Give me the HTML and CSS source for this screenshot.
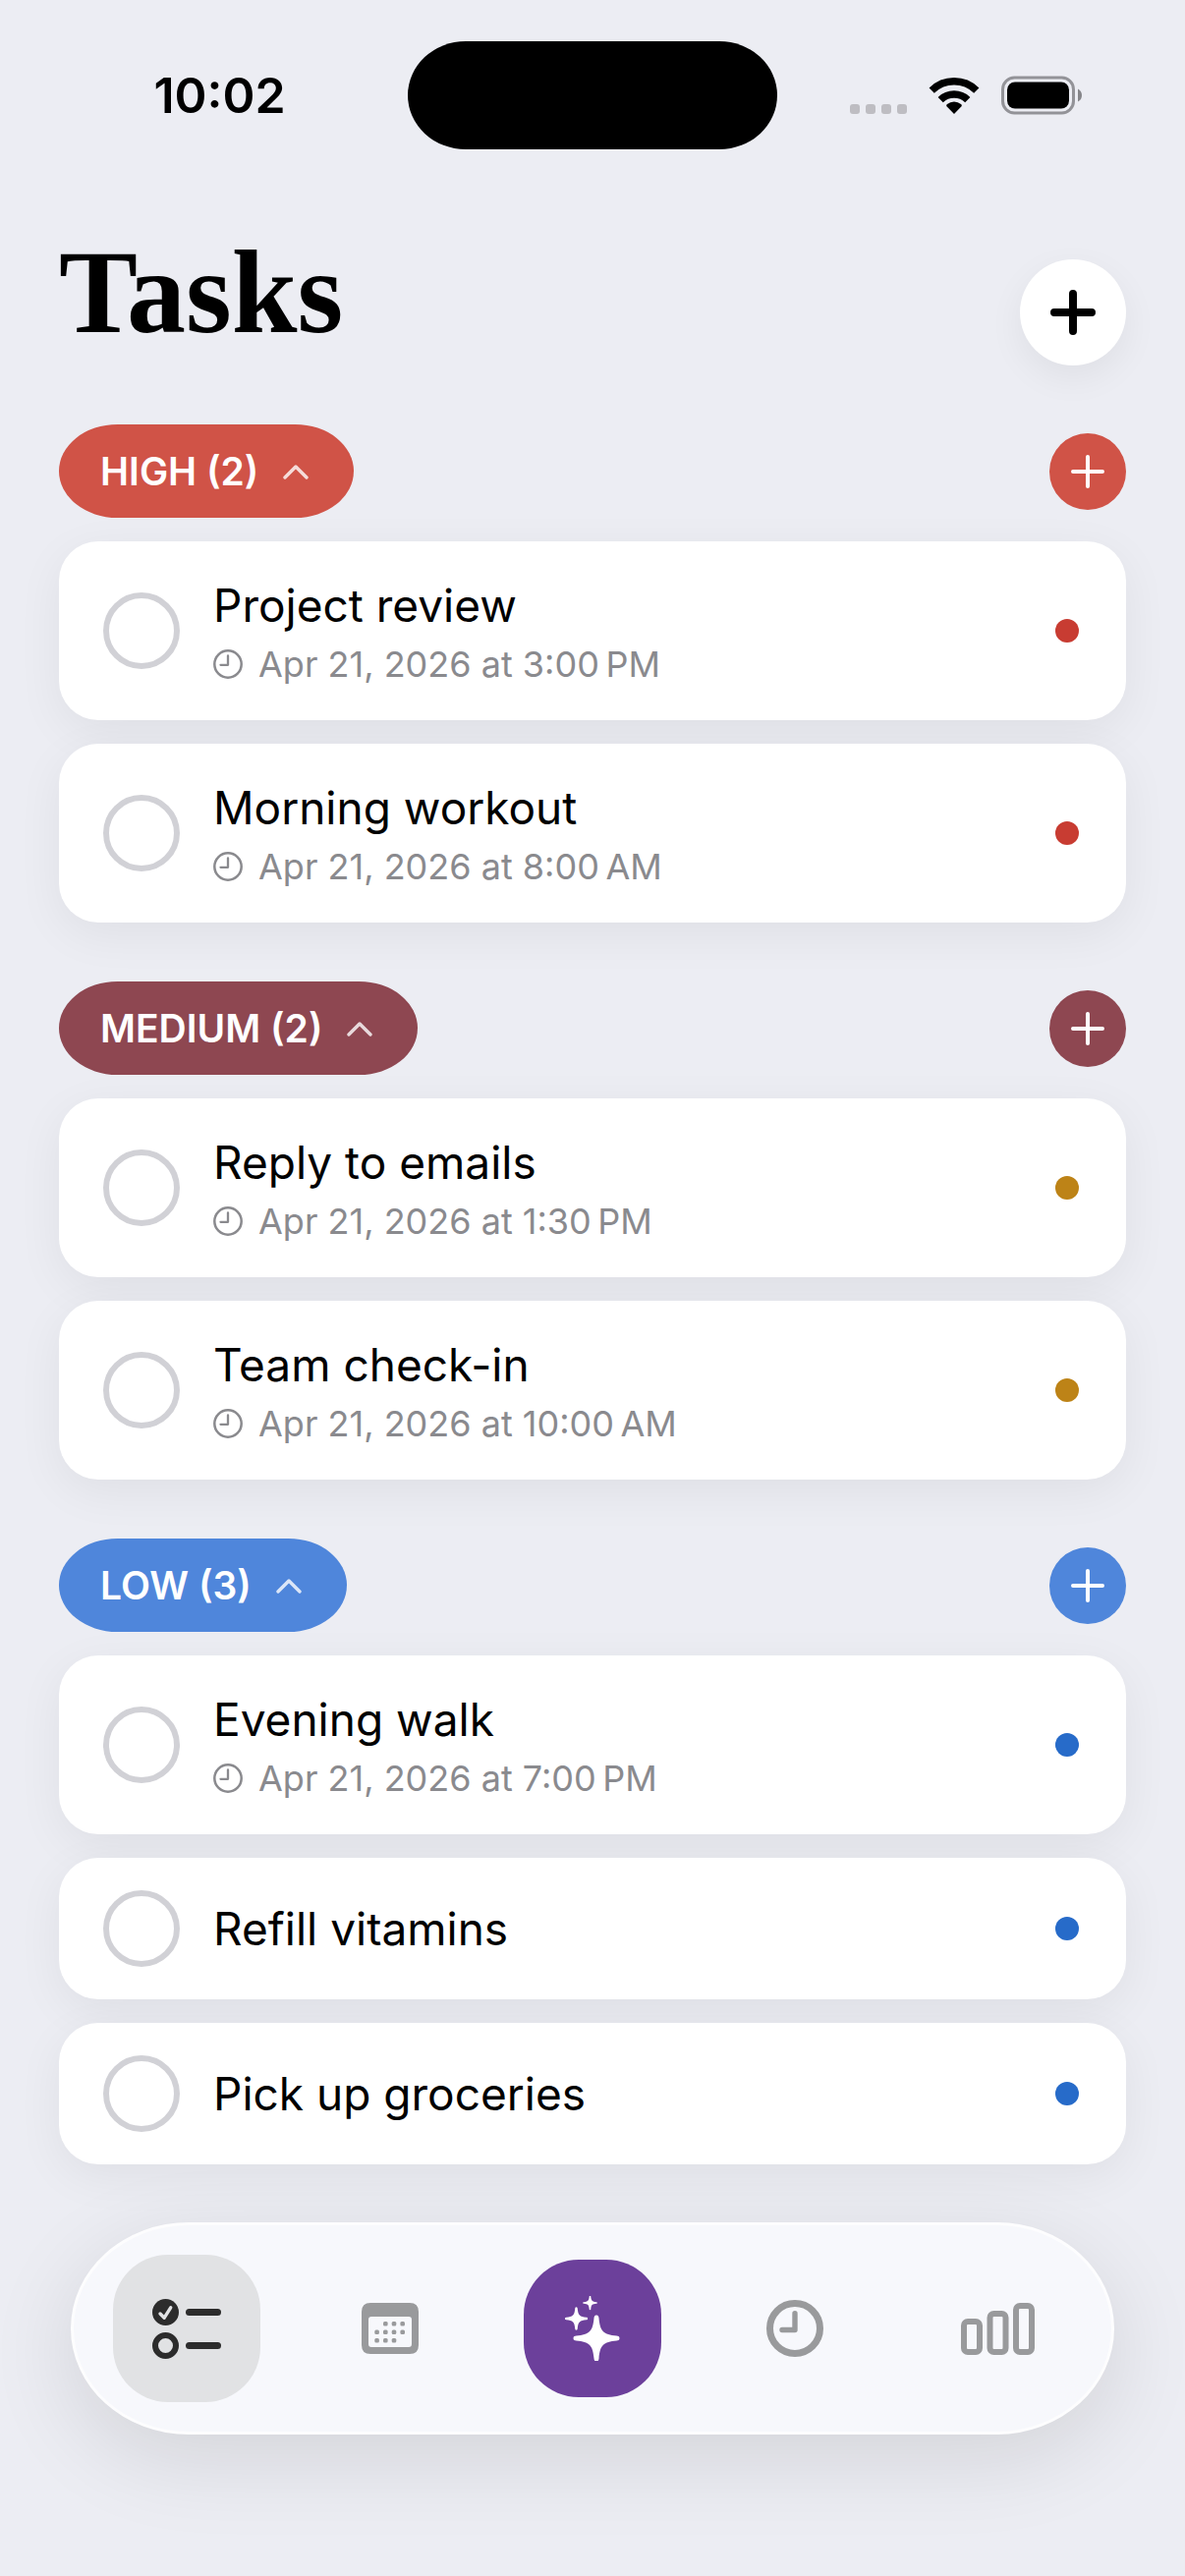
FILE: index.html
```html
<!DOCTYPE html>
<html lang="en">
<head>
    <meta charset="UTF-8">
    <meta name="viewport" content="width=device-width, initial-scale=1">
    <title>Tasks</title>
    <link rel="stylesheet" href="styles.css">
</head>
<body>
    <!-- shared icons -->
    <svg class="sprite" aria-hidden="true">
        <symbol id="plus" viewBox="0 0 34 34">
            <path d="M17 2v30M2 17h30" fill="none" stroke="currentColor" stroke-width="4" stroke-linecap="round"/>
        </symbol>
        <symbol id="chevron" viewBox="0 0 28 18">
            <path d="M3 15L14 4l11 11" fill="none" stroke="currentColor" stroke-width="3.4" stroke-linecap="round" stroke-linejoin="round"/>
        </symbol>
        <symbol id="clock" viewBox="0 0 30 30">
            <circle cx="15" cy="15" r="13.7" fill="none" stroke="currentColor" stroke-width="2.5"/>
            <path d="M15 6.5v9.3H7.5" fill="none" stroke="currentColor" stroke-width="2.3" stroke-linecap="round" stroke-linejoin="round"/>
        </symbol>
        <symbol id="star" viewBox="-24 -24 48 48">
            <path fill="currentColor" d="M0-23.5C2-23.5 2.3-22 2.5-20.5 3.7-7 7-3.7 20.5-2.5 22-2.3 23.5-2 23.5 0 23.5 2 22 2.3 20.5 2.5 7 3.7 3.7 7 2.5 20.5 2.3 22 2 23.5 0 23.5-2 23.5-2.3 22-2.5 20.5-3.7 7-7 3.7-20.5 2.5-22 2.3-23.5 2-23.5 0-23.5-2-22-2.3-20.5-2.5-7-3.7-3.7-7-2.5-20.5-2.3-22-2-23.5 0-23.5z"/>
        </symbol>
    </svg>

    <div class="status-bar">
        <time class="status-time">10:02</time>
        <div class="island"></div>
        <div class="status-icons">
            <svg class="signal" width="58" height="38" viewBox="0 0 58 38">
                <g fill="#bebdc2">
                    <rect y="28" width="10" height="10" rx="3"/>
                    <rect x="16" y="28" width="10" height="10" rx="3"/>
                    <rect x="32" y="28" width="10" height="10" rx="3"/>
                    <rect x="48" y="28" width="10" height="10" rx="3"/>
                </g>
            </svg>
            <svg width="52" height="38" viewBox="0 0 52 38">
                <g fill="none" stroke="#000" stroke-width="7.5">
                    <path d="M3.2 14.2a32.5 32.5 0 0 1 45.6 0"/>
                    <path d="M12.2 23.6a20 20 0 0 1 27.6 0"/>
                </g>
                <path d="M26 38l-7.3-7.5c-.8-.9-.6-1.9.3-2.6a11 11 0 0 1 14 0c.9.7 1.1 1.7.3 2.6z"/>
            </svg>
            <svg width="82" height="40" viewBox="0 0 82 40">
                <rect x="1.5" y="2" width="72" height="36" rx="12" fill="none" stroke="#939398" stroke-width="3"/>
                <rect x="6" y="6.5" width="63" height="27" rx="8"/>
                <path d="M78 13.5q4 2 4 6.500t-4 6.500z" fill="#858589"/>
            </svg>
        </div>
    </div>

    <main class="content">
        <header class="page-header">
            <h1>Tasks</h1>
            <button class="new-task" type="button" aria-label="New task">
                <svg width="46" height="46" viewBox="0 0 46 46">
                    <path d="M23 4v38M4 23h38" stroke="#000" stroke-width="8" stroke-linecap="round"/>
                </svg>
            </button>
        </header>

        <section class="group high">
            <div class="group-header">
                <button class="pill" type="button" aria-expanded="true">HIGH (2) <svg width="28" height="18"><use href="#chevron"/></svg></button>
                <button class="add" type="button" aria-label="Add high priority task"><svg width="34" height="34"><use href="#plus"/></svg></button>
            </div>
            <ul class="tasks">
                <li class="task">
                    <input type="checkbox" id="task1">
                    <label for="task1">
                        <span class="title">Project review</span>
                        <span class="due"><svg width="30" height="30"><use href="#clock"/></svg>Apr 21, 2026 at 3:00&#8239;PM</span>
                    </label>
                    <span class="dot"></span>
                </li>
                <li class="task">
                    <input type="checkbox" id="task2">
                    <label for="task2">
                        <span class="title">Morning workout</span>
                        <span class="due"><svg width="30" height="30"><use href="#clock"/></svg>Apr 21, 2026 at 8:00&#8239;AM</span>
                    </label>
                    <span class="dot"></span>
                </li>
            </ul>
        </section>

        <section class="group medium">
            <div class="group-header">
                <button class="pill" type="button" aria-expanded="true">MEDIUM (2) <svg width="28" height="18"><use href="#chevron"/></svg></button>
                <button class="add" type="button" aria-label="Add medium priority task"><svg width="34" height="34"><use href="#plus"/></svg></button>
            </div>
            <ul class="tasks">
                <li class="task">
                    <input type="checkbox" id="task3">
                    <label for="task3">
                        <span class="title">Reply to emails</span>
                        <span class="due"><svg width="30" height="30"><use href="#clock"/></svg>Apr 21, 2026 at 1:30&#8239;PM</span>
                    </label>
                    <span class="dot"></span>
                </li>
                <li class="task">
                    <input type="checkbox" id="task4">
                    <label for="task4">
                        <span class="title">Team check-in</span>
                        <span class="due"><svg width="30" height="30"><use href="#clock"/></svg>Apr 21, 2026 at 10:00&#8239;AM</span>
                    </label>
                    <span class="dot"></span>
                </li>
            </ul>
        </section>

        <section class="group low">
            <div class="group-header">
                <button class="pill" type="button" aria-expanded="true">LOW (3) <svg width="28" height="18"><use href="#chevron"/></svg></button>
                <button class="add" type="button" aria-label="Add low priority task"><svg width="34" height="34"><use href="#plus"/></svg></button>
            </div>
            <ul class="tasks">
                <li class="task">
                    <input type="checkbox" id="task5">
                    <label for="task5">
                        <span class="title">Evening walk</span>
                        <span class="due"><svg width="30" height="30"><use href="#clock"/></svg>Apr 21, 2026 at 7:00&#8239;PM</span>
                    </label>
                    <span class="dot"></span>
                </li>
                <li class="task">
                    <input type="checkbox" id="task6">
                    <label for="task6"><span class="title">Refill vitamins</span></label>
                    <span class="dot"></span>
                </li>
                <li class="task">
                    <input type="checkbox" id="task7">
                    <label for="task7"><span class="title">Pick up groceries</span></label>
                    <span class="dot"></span>
                </li>
            </ul>
        </section>
    </main>

    <nav class="tab-bar">
        <button class="tab active" type="button" aria-label="Tasks" aria-current="page">
            <span class="tile">
                <svg width="70" height="61" viewBox="0 0 70 61">
                    <circle cx="13.5" cy="13.5" r="13.5" fill="#2c2c2c"/>
                    <path d="M8 15l4.2 4.2L18.7 8.8" fill="none" stroke="#e1e2e4" stroke-width="3.4" stroke-linecap="round" stroke-linejoin="round"/>
                    <circle cx="13.5" cy="47.5" r="10.5" fill="none" stroke="#2c2c2c" stroke-width="6"/>
                    <rect x="34" y="10" width="36" height="7" rx="3.5" fill="#2c2c2c"/>
                    <rect x="34" y="44" width="36" height="7" rx="3.5" fill="#2c2c2c"/>
                </svg>
            </span>
        </button>
        <button class="tab" type="button" aria-label="Calendar">
            <svg width="58" height="52" viewBox="0 0 58 52">
                <path fill="currentColor" fill-rule="evenodd" d="M9 0h40q9 0 9 9v34q0 9-9 9H9q-9 0-9-9V9q0-9 9-9zm1 14q-3 0-3 3v25q0 3 3 3h38q3 0 3-3V17q0-3-3-3z"/>
                <g fill="currentColor">
                    <rect x="22" y="19" width="4.6" height="4.6" rx="1.5"/>
                    <rect x="30.7" y="19" width="4.6" height="4.6" rx="1.5"/>
                    <rect x="39.4" y="19" width="4.6" height="4.6" rx="1.5"/>
                    <rect x="13.3" y="27.5" width="4.6" height="4.6" rx="1.5"/>
                    <rect x="22" y="27.5" width="4.6" height="4.6" rx="1.5"/>
                    <rect x="30.7" y="27.5" width="4.6" height="4.6" rx="1.5"/>
                    <rect x="39.4" y="27.5" width="4.6" height="4.6" rx="1.5"/>
                    <rect x="13.3" y="36" width="4.6" height="4.6" rx="1.5"/>
                    <rect x="22" y="36" width="4.6" height="4.6" rx="1.5"/>
                    <rect x="30.7" y="36" width="4.6" height="4.6" rx="1.5"/>
                </g>
            </svg>
        </button>
        <button class="tab assistant" type="button" aria-label="Assistant">
            <span class="tile">
                <svg width="56" height="66" viewBox="0 0 56 66">
                    <use href="#star" x="8" y="19" width="48" height="48"/>
                    <use href="#star" x="-.5" y="11" width="24" height="24"/>
                    <use href="#star" x="18" y="-.5" width="15" height="15"/>
                </svg>
            </span>
        </button>
        <button class="tab" type="button" aria-label="History">
            <svg width="58" height="58" viewBox="0 0 58 58">
                <circle cx="29" cy="29" r="25.5" fill="none" stroke="currentColor" stroke-width="7"/>
                <path d="M29 13.7v16.8H16" fill="none" stroke="currentColor" stroke-width="5.4" stroke-linecap="round" stroke-linejoin="round"/>
            </svg>
        </button>
        <button class="tab" type="button" aria-label="Statistics">
            <svg width="75" height="53" viewBox="0 0 75 53">
                <g fill="none" stroke="currentColor" stroke-width="6">
                    <rect x="3" y="19" width="16" height="31" rx="4"/>
                    <rect x="29.5" y="11" width="16" height="39" rx="4"/>
                    <rect x="56" y="3" width="16" height="47" rx="4"/>
                </g>
            </svg>
        </button>
    </nav>
</body>
</html>
```
FILE: styles.css
```css
* { box-sizing: border-box; }
body { font-family: Inter, "Liberation Sans", sans-serif; margin: 0; min-height: 100vh; display: flex; flex-direction: column; background-color: #ecedf3; color: #000; }
button { font: inherit; border: none; padding: 0; cursor: pointer; }
svg { display: block; flex: none; }
.sprite { display: none; }

/* status bar */
.status-bar { display: grid; grid-template-columns: 1fr 376px 1fr; align-items: center; padding: 42px 0 112px; }
.status-time { padding-left: 32px; text-align: center; font-size: 50px; font-weight: 600; line-height: 60px; }
.island { height: 110px; border-radius: 60px / 56px; background-color: #000; }
.status-icons { display: flex; align-items: center; justify-content: center; gap: 22px; padding-right: 32px; }

/* page */
.content { display: flex; flex-direction: column; gap: 60px; padding: 0 60px; }
.page-header { display: flex; justify-content: space-between; align-items: flex-start; }
h1 { margin: 0; font-family: "Liberation Serif", serif; font-size: 120px; font-weight: 700; line-height: 68px; }
.new-task { display: grid; place-items: center; width: 108px; height: 108px; border-radius: 50%; background-color: #fff; box-shadow: 0 12px 36px rgba(0, 0, 0, 0.06); }

/* priority groups */
.high { --accent: #d05347; --dot: #c83c32; }
.medium { --accent: #8e4751; --dot: #bd8317; }
.low { --accent: #4f86db; --dot: #276bc9; }
.group-header { display: flex; justify-content: space-between; align-items: center; margin-bottom: 24px; }
.pill { display: flex; align-items: center; gap: 24px; height: 95px; padding: 0 45px 0 42px; border-radius: 60px / 48px; background-color: var(--accent); color: #fff; font-size: 39px; font-weight: 600; }
.pill svg { opacity: 0.8; }
.add { display: grid; place-items: center; width: 78px; height: 78px; border-radius: 50%; background-color: var(--accent); color: #fff; }

/* task cards */
.tasks { display: flex; flex-direction: column; gap: 24px; margin: 0; padding: 0; list-style: none; }
.task { display: flex; align-items: center; gap: 34px; padding: 33px 48px 33px 45px; border-radius: 40px; background-color: #fff; box-shadow: 0 12px 48px rgba(0, 0, 0, 0.06); }
.task input { appearance: none; flex: none; width: 78px; height: 78px; margin: 0; border: 6px solid #d1d1d6; border-radius: 50%; }
.task input:checked { background-color: #d1d1d6; }
.task label { flex: 1; display: flex; flex-direction: column; gap: 4px; }
.title { font-size: 46px; line-height: 64px; }
.due { display: flex; align-items: center; gap: 16px; color: #8a8a8e; font-size: 36px; line-height: 48px; }
.dot { width: 24px; height: 24px; border-radius: 50%; background-color: var(--dot); }

/* tab bar */
.tab-bar { display: flex; margin: auto 72px 144px; padding: 30px 12px; border: 3px solid #fdfdfe; border-radius: 120px / 108px; background-color: #f7f8fc; box-shadow: 0 24px 90px rgba(0, 0, 0, 0.11); }
.tab { flex: 1; display: grid; place-items: center; height: 150px; background: none; color: #999a9c; }
.tile { display: grid; place-items: center; width: 150px; height: 150px; border-radius: 56px; }
.active .tile { background-color: #e1e2e4; }
.assistant .tile { width: 140px; height: 140px; background-color: #6c409b; color: #fff; }
```
